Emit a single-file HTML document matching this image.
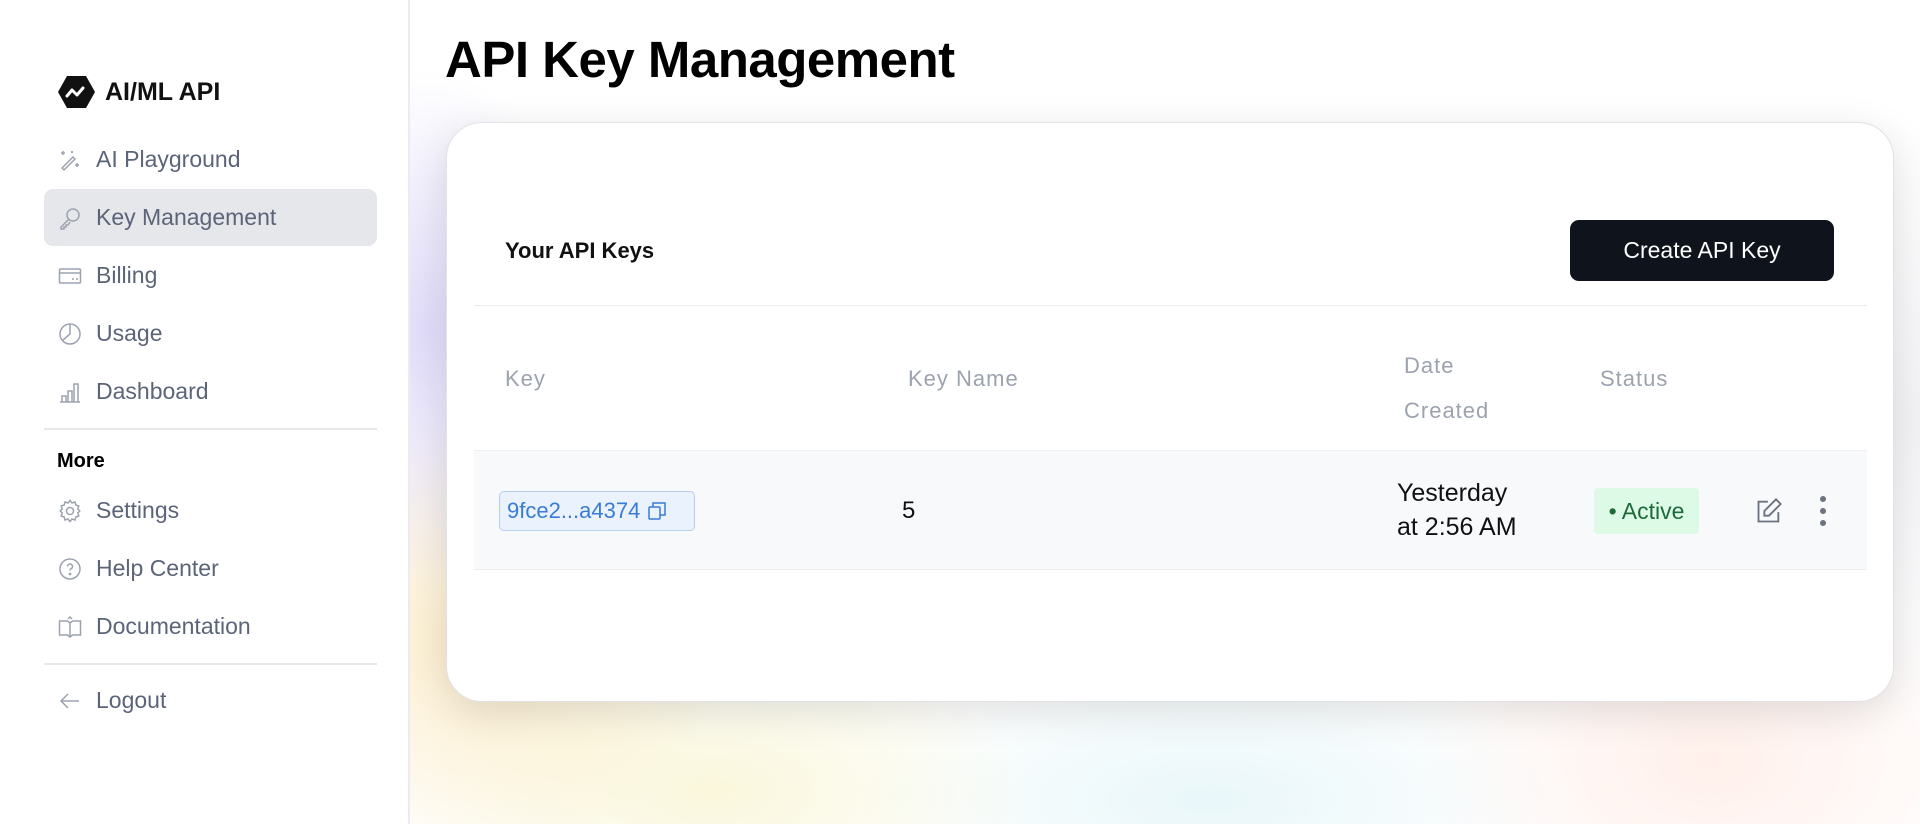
<!DOCTYPE html>
<html><head><meta charset="utf-8"><style>
*{box-sizing:border-box;margin:0;padding:0}
body{width:1920px;height:824px;overflow:hidden;font-family:"Liberation Sans",sans-serif;background:#fff;position:relative}
.main{position:absolute;left:410px;top:0;right:0;bottom:0;background:
radial-gradient(ellipse 160px 260px at 20px 330px,rgba(200,190,245,.55),transparent),
radial-gradient(ellipse 260px 220px at 60px 640px,rgba(250,225,170,.6),transparent),
radial-gradient(ellipse 320px 160px at 300px 790px,rgba(245,240,190,.55),transparent),
radial-gradient(ellipse 360px 140px at 800px 800px,rgba(215,240,245,.55),transparent),
radial-gradient(ellipse 300px 200px at 1300px 760px,rgba(255,225,215,.5),transparent),
radial-gradient(ellipse 200px 300px at 1500px 420px,rgba(235,235,240,.6),transparent),#fff}
.side{position:absolute;left:0;top:0;width:410px;height:824px;background:#fff;border-right:2px solid #ececf0}
.logo{position:absolute;left:58px;top:75px;display:flex;align-items:center}
.logo span{font-weight:bold;font-size:25px;color:#111;margin-left:10px}
.item{position:absolute;left:44px;width:333px;height:57px;display:flex;align-items:center;padding-left:14px;font-size:23px;color:#5b6478;border-radius:9px}
.item svg{width:24px;height:24px;margin-right:14px;flex:none}
.act{background:#e6e7ea}
.hr{position:absolute;left:44px;width:333px;height:2px;background:#e8e8ea}
.more{position:absolute;left:57px;top:450px;font-weight:bold;font-size:20px;color:#000}
h1{position:absolute;left:445px;top:30px;font-size:51px;font-weight:bold;color:#000;letter-spacing:-.5px}
.card{position:absolute;left:446px;top:122px;width:1448px;height:580px;background:#fff;border:1px solid #e2e2e6;border-radius:36px;box-shadow:0 10px 40px rgba(0,0,0,.12)}
.abs{position:absolute}
.hd{color:#9ca3af;font-size:22px;letter-spacing:1px}
</style></head><body>
<div class="main"></div>
<div class="side">
 <div class="logo"><svg width="37" height="34" viewBox="0 0 37 34"><path d="M9 1h19l9 16-9 16H9L0 17z" fill="#111"/><path d="M9 21l5-6 5 5 6-7" stroke="#fff" stroke-width="3" fill="none" stroke-linecap="round" stroke-linejoin="round"/></svg><span>AI/ML API</span></div>
 <div class="item" style="top:131px"><svg viewBox="0 0 24 24" fill="none" stroke="#9ca3af" stroke-width="1.5"><path d="M4 20l11-11 2 2L6 22z"/><path d="M5 3v4M3 5h4M19 15v4M17 17h4M14 3v2M13 4h2"/></svg>AI Playground</div>
 <div class="item act" style="top:189px"><svg viewBox="0 0 24 24" fill="none" stroke="#9ca3af" stroke-width="1.5"><circle cx="15" cy="9" r="6"/><path d="M11 13l-8 8v2h3v-2h2v-2h2l2-3"/></svg>Key Management</div>
 <div class="item" style="top:247px"><svg viewBox="0 0 24 24" fill="none" stroke="#9ca3af" stroke-width="1.5"><rect x="1.5" y="5" width="21" height="14" rx="1"/><path d="M1.5 9h21M14 15h2M18 15h2"/></svg>Billing</div>
 <div class="item" style="top:305px"><svg viewBox="0 0 24 24" fill="none" stroke="#9ca3af" stroke-width="1.5"><circle cx="12" cy="12" r="10"/><path d="M12 2v10l-7 6"/></svg>Usage</div>
 <div class="item" style="top:363px"><svg viewBox="0 0 24 24" fill="none" stroke="#9ca3af" stroke-width="1.5"><path d="M2 22h20M4 22v-6h4v6M10 22V11h4v11M16 22V4h4v18"/></svg>Dashboard</div>
 <div class="hr" style="top:428px"></div>
 <div class="more">More</div>
 <div class="item" style="top:482px"><svg viewBox="0 0 24 24" fill="none" stroke="#9ca3af" stroke-width="1.5"><circle cx="12" cy="12" r="3.5"/><path d="M12 1.5l2 2.5 3-1 .8 3 3 1-1 3 2 2-2 2 1 3-3 1-.8 3-3-1-2 2.5-2-2.5-3 1-.8-3-3-1 1-3-2-2 2-2-1-3 3-1 .8-3 3 1z"/></svg>Settings</div>
 <div class="item" style="top:540px"><svg viewBox="0 0 24 24" fill="none" stroke="#9ca3af" stroke-width="1.5"><circle cx="12" cy="12" r="10"/><path d="M9.5 9.5a2.5 2.5 0 1 1 3.5 2.3c-.7.3-1 .8-1 1.7"/><circle cx="12" cy="17" r=".6" fill="#9ca3af"/></svg>Help Center</div>
 <div class="item" style="top:598px"><svg viewBox="0 0 24 24" fill="none" stroke="#9ca3af" stroke-width="1.5"><path d="M1.5 6h8l2.5 2 2.5-2h8v14h-8L12 22l-2.5-2h-8z"/><path d="M12 8v14M10 4l2-2 2 2"/></svg>Documentation</div>
 <div class="hr" style="top:663px"></div>
 <div class="item" style="top:672px"><svg viewBox="0 0 24 24" fill="none" stroke="#9ca3af" stroke-width="1.5"><path d="M21 12H3M10 5l-7 7 7 7"/></svg>Logout</div>
</div>
<h1>API Key Management</h1>
<div class="card">
 <div class="abs" style="left:58px;top:115px;font-size:22px;font-weight:bold;color:#111">Your API Keys</div>
 <div class="abs" style="left:1123px;top:97px;width:264px;height:61px;background:#0f141c;border-radius:9px;color:#fff;font-size:23px;display:flex;align-items:center;justify-content:center">Create API Key</div>
 <div class="abs" style="left:27px;top:182px;width:1393px;height:1px;background:#ececef"></div>
 <div class="abs hd" style="left:58px;top:243px">Key</div>
 <div class="abs hd" style="left:461px;top:243px">Key Name</div>
 <div class="abs hd" style="left:957px;top:220px;line-height:45px">Date<br>Created</div>
 <div class="abs hd" style="left:1153px;top:243px">Status</div>
 <div class="abs" style="left:27px;top:327px;width:1393px;height:120px;background:#f7f9fb;border-top:1px solid #eceef1;border-bottom:1px solid #eceef1"></div>
 <div class="abs" style="left:52px;top:368px;width:196px;height:40px;background:#eaf2fe;border:1px solid #b8cdef;border-radius:5px;color:#3a7bd5;font-size:22px;display:flex;align-items:center;padding-left:7px">9fce2...a4374<svg width="18" height="18" viewBox="0 0 18 18" style="margin-left:8px" fill="none" stroke="#3a7bd5" stroke-width="1.5"><rect x="1" y="5" width="11" height="12" rx="1"/><path d="M5 5V1h12v12h-5"/></svg></div>
 <div class="abs" style="left:455px;top:374px;font-size:24px;color:#111">5</div>
 <div class="abs" style="left:950px;top:353px;font-size:25px;color:#111;line-height:34px">Yesterday<br>at 2:56 AM</div>
 <div class="abs" style="left:1147px;top:365px;width:105px;height:46px;background:#dcfae6;border-radius:4px;color:#1d6b3a;font-size:23px;display:flex;align-items:center;justify-content:center">• Active</div>
 <svg class="abs" style="left:1308px;top:374px" width="28" height="28" viewBox="0 0 24 24" fill="none" stroke="#6b7280" stroke-width="1.6"><path d="M11 4H3v17h17v-8"/><path d="M18 2l4 4-10 10H8v-4z"/></svg>
 <svg class="abs" style="left:1371px;top:372px" width="10" height="32" viewBox="0 0 10 32" fill="#6b7280"><circle cx="5" cy="4" r="3"/><circle cx="5" cy="16" r="3"/><circle cx="5" cy="28" r="3"/></svg>
</div>
</body></html>
